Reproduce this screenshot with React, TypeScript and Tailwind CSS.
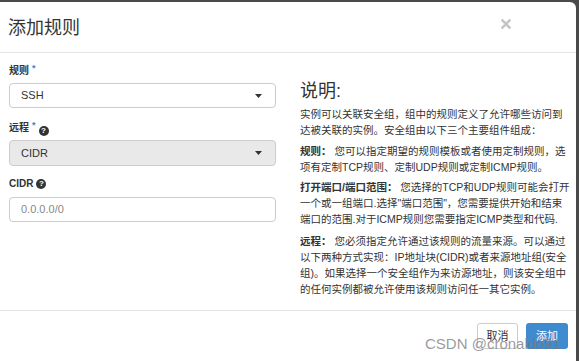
import React from "react";

const FONT = {
  fontFamily: '"Liberation Sans", "Noto Sans CJK SC", sans-serif',
};

function Help() {
  return (
    <span className="inline-flex items-center justify-center w-[10px] h-[10px] rounded-full bg-[#333] text-white text-[8px] font-bold leading-none ml-[3px]">
      ?
    </span>
  );
}

function Caret() {
  return (
    <svg width="7" height="4" viewBox="0 0 7 4" className="block">
      <path d="M0 0 L7 0 L3.5 4 Z" fill="#333" />
    </svg>
  );
}

function Line({ children }: { children: React.ReactNode }) {
  return <div className="whitespace-nowrap h-[16px] leading-[16px]">{children}</div>;
}

export default function App() {
  return (
    <div className="w-[581px] h-[361px] bg-white overflow-hidden" style={FONT}>
      <div className="w-[579px] h-full bg-[#4a4a4a] pt-[2px] pr-[3px]">
        <div className="w-[576px] h-full bg-white rounded-tr-[6px] flex flex-col text-[#333]">
          {/* header */}
          <div className="h-[51px] border-b border-[#e5e5e5] flex items-center justify-between pl-[8px] pr-[65px] shrink-0">
            <div className="text-[18px] leading-[22px] font-normal text-[#333] pt-[1px]">添加规则</div>
            <svg width="10" height="10" viewBox="0 0 10 10" className="block -mt-[6px]">
              <path d="M1.5 1.5 L8.5 8.5 M8.5 1.5 L1.5 8.5" stroke="#c6c6c6" strokeWidth="2.6" strokeLinecap="square" />
            </svg>
          </div>
          {/* body */}
          <div className="flex h-[257px] shrink-0 pl-[9px]">
            <div className="w-[267px] pt-[11px]">
              <div className="h-[14px] leading-[14px] text-[10px] font-bold flex items-start">
                规则<span className="text-[#3a87c8] text-[9px] ml-[3px] leading-[8px]">*</span>
              </div>
              <div className="mt-[5px] h-[25px] border border-[#ccc] rounded-[4px] flex items-center justify-between pl-[11px] pr-[13px] text-[11px]">
                <span>SSH</span>
                <Caret />
              </div>
              <div className="mt-[13px] h-[14px] leading-[14px] text-[10px] font-bold flex items-start">
                远程<span className="text-[#3a87c8] text-[9px] ml-[3px] leading-[8px]">*</span>
                <span className="mt-[2px]"><Help /></span>
              </div>
              <div className="mt-[5px] h-[26px] border border-[#ccc] bg-[#e9e9e9] rounded-[4px] flex items-center justify-between pl-[11px] pr-[13px] text-[11px]">
                <span>CIDR</span>
                <Caret />
              </div>
              <div className="mt-[11px] h-[14px] leading-[14px] text-[10px] font-bold flex items-center">
                CIDR<Help />
              </div>
              <div className="mt-[6px] h-[25px] border border-[#ccc] rounded-[4px] flex items-center pl-[11px] text-[11px] text-[#888]">
                0.0.0.0/0
              </div>
            </div>
            <div className="ml-[24px] w-[272px] pt-[27px] text-[10.5px] text-[#333]">
              <div className="h-[22px] leading-[22px] text-[18px] font-normal">说明:</div>
              <div className="mt-[4px] mb-[5px]">
                <Line>实例可以关联安全组，组中的规则定义了允许哪些访问到</Line>
                <Line>达被关联的实例。安全组由以下三个主要组件组成：</Line>
              </div>
              <div className="mb-[4px]">
                <Line><b>规则：</b> 您可以指定期望的规则模板或者使用定制规则，选</Line>
                <Line>项有定制TCP规则、定制UDP规则或定制ICMP规则。</Line>
              </div>
              <div className="mb-[6px]">
                <Line><b>打开端口/端口范围：</b> 您选择的TCP和UDP规则可能会打开</Line>
                <Line>一个或一组端口.选择"端口范围"，您需要提供开始和结束</Line>
                <Line>端口的范围.对于ICMP规则您需要指定ICMP类型和代码.</Line>
              </div>
              <div>
                <Line><b>远程：</b> 您必须指定允许通过该规则的流量来源。可以通过</Line>
                <Line>以下两种方式实现：IP地址块(CIDR)或者来源地址组(安全</Line>
                <Line>组)。如果选择一个安全组作为来访源地址，则该安全组中</Line>
                <Line>的任何实例都被允许使用该规则访问任一其它实例。</Line>
              </div>
            </div>
          </div>
          {/* footer */}
          <div className="relative border-t border-[#e5e5e5] flex-1 flex justify-end items-start pt-[12px] pr-[8px] gap-[8px]">
            <div className="w-[41px] h-[26px] border border-[#ccc] rounded-[3px] bg-white flex items-center justify-center text-[11px] text-[#333]">
              取消
            </div>
            <div className="w-[42px] h-[26px] rounded-[3px] bg-[#3f8bd0] flex items-center justify-center text-[11px] text-white">
              添加
            </div>
            <div className="absolute left-[425px] top-[24px] text-[15px] leading-[18px] text-[rgba(120,120,120,0.75)] whitespace-nowrap">
              CSDN @cronaldo91
            </div>
          </div>
        </div>
      </div>
    </div>
  );
}
